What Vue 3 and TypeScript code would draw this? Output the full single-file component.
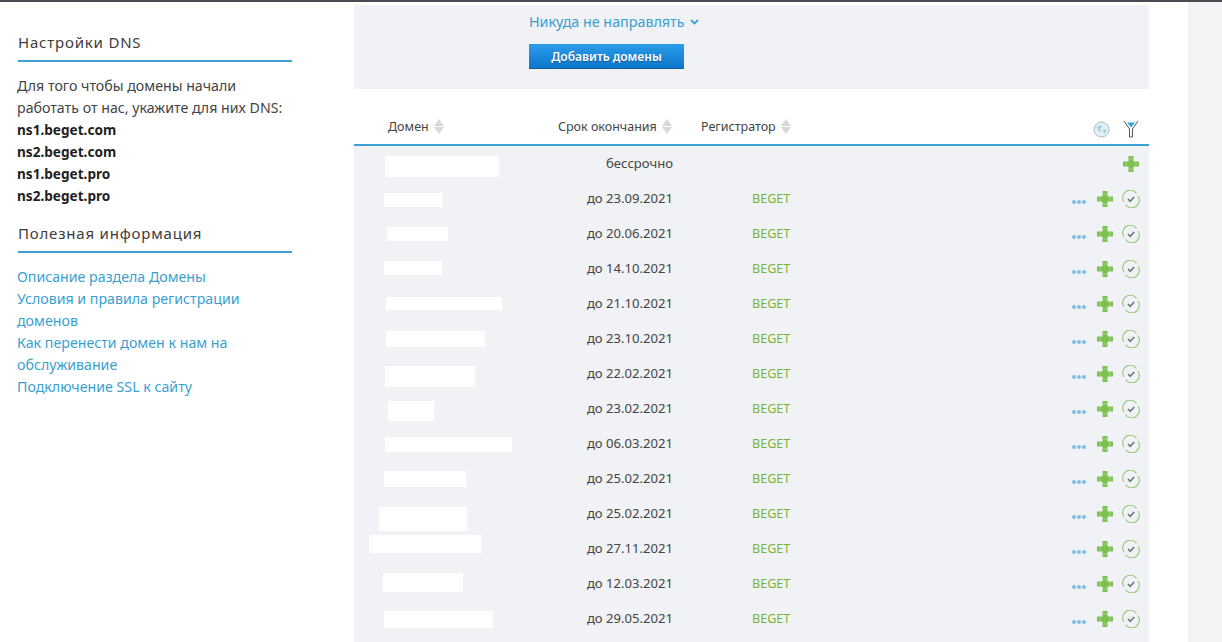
<template>
  <div class="page">
    <div class="topbar"></div>
    <div class="layout">
      <aside class="sidebar">
        <h3 class="side-title">Настройки DNS</h3>
        <p class="side-text">
          Для того чтобы домены начали<br />
          работать от нас, укажите для них DNS:<br />
          <b v-for="ns in nameServers" :key="ns" class="ns">{{ ns }}</b>
        </p>
        <h3 class="side-title second">Полезная информация</h3>
        <div class="side-links">
          <a v-for="link in links" :key="link" class="side-link">{{ link }}</a>
        </div>
      </aside>

      <main class="content">
        <section class="add-panel">
          <a class="redirect">Никуда не направлять
            <svg class="chevron" width="9" height="6" viewBox="0 0 9 6"><path d="M1 1l3.5 3.5L8 1" fill="none" stroke="#3aa3d6" stroke-width="1.8" /></svg>
          </a>
          <button class="add-btn">Добавить домены</button>
        </section>

        <div class="table-head">
          <div class="th th-domain">Домен <span class="sort"><i class="up"></i><i class="down"></i></span></div>
          <div class="th th-date">Срок окончания <span class="sort"><i class="up"></i><i class="down"></i></span></div>
          <div class="th th-reg">Регистратор <span class="sort"><i class="up"></i><i class="down"></i></span></div>
          <div class="head-icons">
            <svg width="17" height="17" viewBox="0 0 17 17">
              <circle cx="8.5" cy="8.5" r="7.5" fill="#e4eff5" stroke="#a9b9c2" />
              <path d="M4 6l3-2 2 2-2 2 1 2-2 1zM10 9l3-1 0 3-2 2z" fill="#9fd0e6" />
            </svg>
            <svg width="16" height="18" viewBox="0 0 16 18">
              <path d="M1 1l5.500 8v8h3V9l5.500-8" fill="none" stroke="#4d5a63" stroke-width="1" />
              <path d="M4 2.500h8L8 7.500z" fill="#3aa3d6" />
            </svg>
          </div>
        </div>

        <div class="rows">
          <div v-for="(row, i) in rows" :key="i" class="row">
            <div class="mask" :style="maskStyle(row.mask)"></div>
            <div class="date">{{ row.date }}</div>
            <div class="registrar">{{ row.registrar }}</div>
            <div class="actions">
              <span v-if="row.registrar" class="dots"><i></i><i></i><i></i></span>
              <svg class="plus" :class="{ solo: !row.registrar }" width="16" height="16" viewBox="0 0 16 16">
                <path d="M5.500 0h5v5.500h5.500v5h-5.500v5.500h-5v-5.500h-5.500v-5h5.500z" fill="#7cc04f" />
                <path d="M5.500 3h5M5.500 13h5M3 5.500v5M13 5.500v5" stroke="#a8d68c" stroke-width="1" />
              </svg>
              <svg v-if="row.registrar" class="check" width="18" height="18" viewBox="0 0 18 18">
                <path d="M2 12A7.500 7.500 0 0 1 14.500 3.500M16 6A7.500 7.500 0 0 1 3.500 14.500" fill="none" stroke="#93c976" stroke-width="1.100" />
                <path d="M6 9l2.200 2.300 4-4.300" fill="none" stroke="#6b7882" stroke-width="1.600" />
              </svg>
            </div>
          </div>
        </div>
      </main>

      <div class="right-strip"></div>
    </div>
  </div>
</template>

<script setup lang="ts">
type Mask = [number, number, number, number]

interface Row {
  date: string
  registrar: string
  mask: Mask
}

const nameServers = ['ns1.beget.com', 'ns2.beget.com', 'ns1.beget.pro', 'ns2.beget.pro']

const links = [
  'Описание раздела Домены',
  'Условия и правила регистрации доменов',
  'Как перенести домен к нам на обслуживание',
  'Подключение SSL к сайту',
]

// hidden domain names: left, top, width, height inside the row
const rows: Row[] = [
  { date: 'бессрочно', registrar: '', mask: [31, 10, 114, 21] },
  { date: 'до 23.09.2021', registrar: 'BEGET', mask: [30, 12, 58, 14] },
  { date: 'до 20.06.2021', registrar: 'BEGET', mask: [33, 11, 61, 14] },
  { date: 'до 14.10.2021', registrar: 'BEGET', mask: [30, 10, 58, 14] },
  { date: 'до 21.10.2021', registrar: 'BEGET', mask: [32, 11, 116, 13] },
  { date: 'до 23.10.2021', registrar: 'BEGET', mask: [32, 10, 99, 16] },
  { date: 'до 22.02.2021', registrar: 'BEGET', mask: [31, 10, 90, 21] },
  { date: 'до 23.02.2021', registrar: 'BEGET', mask: [34, 10, 46, 20] },
  { date: 'до 06.03.2021', registrar: 'BEGET', mask: [31, 11, 127, 15] },
  { date: 'до 25.02.2021', registrar: 'BEGET', mask: [30, 10, 82, 16] },
  { date: 'до 25.02.2021', registrar: 'BEGET', mask: [25, 11, 88, 24] },
  { date: 'до 27.11.2021', registrar: 'BEGET', mask: [15, 4, 112, 18] },
  { date: 'до 12.03.2021', registrar: 'BEGET', mask: [29, 7, 80, 19] },
  { date: 'до 29.05.2021', registrar: 'BEGET', mask: [30, 10, 109, 17] },
]

const maskStyle = (m: Mask) => ({
  left: m[0] + 'px',
  top: m[1] + 'px',
  width: m[2] + 'px',
  height: m[3] + 'px',
})
</script>

<style>
html,
body {
  margin: 0;
  background: #fff;
  overflow: hidden;
}
</style>

<style scoped>
.page {
  height: 642px;
  overflow: hidden;
  font-family: "Noto Sans", Arial, sans-serif;
  color: #333;
}

.topbar {
  height: 2px;
  background: #4a4c52;
}

.layout {
  display: flex;
  align-items: flex-start;
}

.sidebar {
  width: 274px;
  margin-left: 18px;
  margin-right: 62px;
  padding-top: 30px;
}

.side-title {
  margin: 0;
  padding-bottom: 8px;
  border-bottom: 2px solid #3d9fd3;
  font-size: 15px;
  line-height: 20px;
  font-weight: 400;
  letter-spacing: 0.8px;
  color: #3c3c3c;
}

.side-title.second {
  margin-top: 16px;
}

.side-text {
  margin: 13px 0 0 -1px;
  font-size: 14.200px;
  line-height: 22px;
  color: #444;
}

.ns {
  display: block;
  font-size: 13.600px;
  font-weight: 700;
  color: #1e1e1e;
}

.side-links {
  margin: 13px 0 0 -1px;
  display: flex;
  flex-direction: column;
}

.side-link {
  font-size: 14.200px;
  line-height: 22px;
  color: #3a9fd0;
}

.content {
  width: 795px;
  padding-top: 3px;
}

.add-panel {
  height: 84px;
  box-sizing: border-box;
  padding: 4px 0 0 175px;
  background: #f0f2f5;
}

.redirect {
  display: block;
  font-size: 14.300px;
  line-height: 26px;
  color: #3a9fd0;
}

.chevron {
  margin-left: 2px;
  vertical-align: 2px;
}

.add-btn {
  display: block;
  width: 155px;
  height: 25px;
  margin-top: 9px;
  padding: 0;
  border: 0;
  border-bottom: 1px solid #0f5f9c;
  background: linear-gradient(#2b9bea, #0c77cc);
  color: #fff;
  font-family: inherit;
  font-size: 12px;
  font-weight: 600;
  text-shadow: 0 1px 1px rgba(0, 0, 0, 0.35);
}

.table-head {
  height: 57px;
  box-sizing: border-box;
  display: flex;
  align-items: center;
  padding-top: 20px;
  border-bottom: 2px solid #3d9fd3;
  font-size: 12.500px;
  color: #444;
}

.th {
  display: flex;
  align-items: center;
  gap: 5px;
}

.th-domain {
  margin-left: 34px;
  width: 170px;
}

.th-date {
  width: 143px;
}

.head-icons {
  margin-left: auto;
  margin-right: 10px;
  margin-top: 5px;
  display: flex;
  align-items: center;
  gap: 13px;
}

.sort {
  display: inline-flex;
  flex-direction: column;
  gap: 1px;
}

.sort i {
  display: block;
  width: 0;
  height: 0;
  border-left: 5.500px solid transparent;
  border-right: 5.500px solid transparent;
}

.sort .up {
  border-bottom: 7px solid #d5d9dc;
}

.sort .down {
  border-top: 7px solid #d5d9dc;
}

.rows {
  padding-bottom: 20px;
  background: #f0f2f5;
}

.row {
  position: relative;
  height: 35px;
  display: flex;
  align-items: center;
  font-size: 13.100px;
}

.mask {
  position: absolute;
  background: #fff;
}

.date {
  width: 319px;
  padding-bottom: 2px;
  text-align: right;
  color: #444;
}

.registrar {
  margin-left: 79px;
  font-size: 12.600px;
  color: #7cb23a;
}

.actions {
  margin-left: auto;
  margin-right: 9px;
  display: flex;
  align-items: center;
}

.dots {
  display: inline-flex;
  gap: 1px;
  margin-top: 6px;
  margin-right: 11px;
}

.dots i {
  width: 4px;
  height: 4px;
  border-radius: 50%;
  background: #7fbde3;
}

.plus {
  margin-right: 9px;
}

.plus.solo {
  margin-right: 1px;
}

.right-strip {
  flex: none;
  width: 34px;
  height: 640px;
  margin-left: 39px;
  background: #f2f3f5;
}
</style>
